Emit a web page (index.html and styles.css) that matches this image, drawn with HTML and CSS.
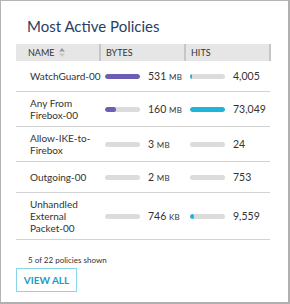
FILE: index.html
```html
<!DOCTYPE html>
<html lang="en">
<head>
    <meta charset="UTF-8">
    <title>Most Active Policies</title>
    <link rel="stylesheet" href="styles.css">
</head>
<body>
    <div class="panel">
        <h2 class="panel-title">Most Active Policies</h2>

        <table class="policies">
            <colgroup>
                <col class="c-name">
                <col class="c-bytes">
                <col class="c-hits">
            </colgroup>
            <thead>
                <tr>
                    <th class="col-name">Name
                        <svg class="sort" width="6" height="9" viewBox="0 0 6 9">
                            <path d="M3 0 L6 3.5 H0 Z" fill="#9a9a9a"/>
                            <path d="M3 9 L6 5.5 H0 Z" fill="#c8c8c8"/>
                        </svg>
                    </th>
                    <th>Bytes</th>
                    <th>Hits</th>
                </tr>
            </thead>
            <tbody>
                <tr>
                    <td><div class="name">WatchGuard-00</div></td>
                    <td><div class="meter"><span class="track"><span class="fill bytes" style="width: 100%"></span></span><span class="val">531 <small>MB</small></span></div></td>
                    <td><div class="meter"><span class="track"><span class="fill hits" style="width: 2px"></span></span><span class="val">4,005</span></div></td>
                </tr>
                <tr>
                    <td><div class="name">Any From Firebox-00</div></td>
                    <td><div class="meter"><span class="track"><span class="fill bytes" style="width: 30%"></span></span><span class="val">160 <small>MB</small></span></div></td>
                    <td><div class="meter"><span class="track"><span class="fill hits" style="width: 100%"></span></span><span class="val">73,049</span></div></td>
                </tr>
                <tr>
                    <td><div class="name">Allow-IKE-to-Firebox</div></td>
                    <td><div class="meter"><span class="track"></span><span class="val">3 <small>MB</small></span></div></td>
                    <td><div class="meter"><span class="track"></span><span class="val">24</span></div></td>
                </tr>
                <tr>
                    <td><div class="name">Outgoing-00</div></td>
                    <td><div class="meter"><span class="track"></span><span class="val">2 <small>MB</small></span></div></td>
                    <td><div class="meter"><span class="track"></span><span class="val">753</span></div></td>
                </tr>
                <tr>
                    <td><div class="name">Unhandled External Packet-00</div></td>
                    <td><div class="meter"><span class="track"></span><span class="val">746 <small>KB</small></span></div></td>
                    <td><div class="meter"><span class="track"><span class="fill hits" style="width: 12%"></span></span><span class="val">9,559</span></div></td>
                </tr>
            </tbody>
        </table>

        <p class="shown">5 of 22 policies shown</p>
        <button class="view-all">View all</button>
    </div>
</body>
</html>
```

FILE: styles.css
```css
:root {
    --text: #333333;
    --title: #2c3d63;
    --line: #d2d2d2;
    --head-bg: #e6e6e6;
    --head-line: #c6c6c6;
    --track: #dcdcdc;
    --bytes: #6b5fb3;
    --hits: #1db5d8;
    --link: #1a9cc4;
}

body {
    margin: 0;
    font-family: Lato, "Open Sans", sans-serif;
    color: var(--text);
    background: #ffffff;
}

.panel {
    box-sizing: border-box;
    width: 290px;
    height: 304px;
    border: 1px solid #b4b4b4;
    border-right: 2px solid #b0b0b0;
    border-bottom: 2px solid #b0b0b0;
    padding: 16px 18px 0 15px;
}

.panel-title {
    margin: 0 0 9px 11px;
    font-size: 15px;
    font-weight: 400;
    line-height: 18px;
    color: var(--title);
}

.policies {
    width: 254px;
    table-layout: fixed;
    border-collapse: collapse;
}

.c-name {
    width: 84px;
}

.c-bytes,
.c-hits {
    width: 85px;
}

.policies th {
    height: 17px;
    padding: 0 0 0 5px;
    background: var(--head-bg);
    border-right: 2px solid var(--head-line);
    font-size: 9px;
    font-weight: 400;
    text-transform: uppercase;
    text-align: left;
    color: var(--text);
}

.policies th.col-name {
    padding-left: 12px;
}

.sort {
    vertical-align: -1px;
    margin-left: 2px;
}

.policies td {
    height: 20px;
    padding: 5px 0 5px 5px;
    border-bottom: 1px solid var(--line);
    font-size: 10.5px;
    line-height: 12px;
    vertical-align: middle;
}

.policies td:first-child {
    padding-left: 14px;
}

/* names run right up to the column edge, no lone "00" on a last line */
.name {
    margin-right: -4px;
    font-size: 10px;
    text-wrap: pretty;
}

.meter {
    display: flex;
    align-items: center;
}

.track {
    display: block;
    width: 35px;
    height: 5px;
    border-radius: 3px;
    background: var(--track);
    overflow: hidden;
}

.fill {
    display: block;
    height: 100%;
    border-radius: 3px;
}

.fill.bytes {
    background: var(--bytes);
}

.fill.hits {
    background: var(--hits);
}

.val {
    margin-left: 8px;
    white-space: nowrap;
}

.val small {
    font-size: 8px;
    letter-spacing: 0.04em;
}

.shown {
    margin: 15px 0 3px 12px;
    font-size: 8px;
    color: var(--text);
}

.view-all {
    box-sizing: border-box;
    width: 61px;
    height: 24px;
    padding: 0;
    border: 1px solid #86d8e9;
    background: #ffffff;
    font-family: Lato, "Open Sans", sans-serif;
    font-size: 10px;
    font-weight: 700;
    text-transform: uppercase;
    color: var(--link);
}
```
